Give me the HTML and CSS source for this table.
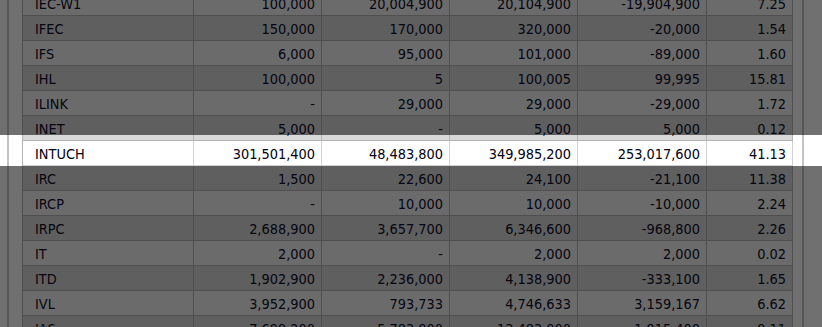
FILE: index.html
```html
<!DOCTYPE html>
<html>
<head>
<meta charset="utf-8">
<link rel="stylesheet" href="styles.css">
</head>
<body>
<div class="screen">
  <div class="rail"></div>
  <div class="sheet">
    <table class="grid">
      <colgroup>
        <col class="c-sym"><col class="c-num"><col class="c-num"><col class="c-num"><col class="c-num5"><col class="c-pct">
      </colgroup>
      <tbody>
        <tr class="light"><td>IEC-W1</td><td>100,000</td><td>20,004,900</td><td>20,104,900</td><td>-19,904,900</td><td>7.25</td></tr>
        <tr class="dark"><td>IFEC</td><td>150,000</td><td>170,000</td><td>320,000</td><td>-20,000</td><td>1.54</td></tr>
        <tr class="light"><td>IFS</td><td>6,000</td><td>95,000</td><td>101,000</td><td>-89,000</td><td>1.60</td></tr>
        <tr class="dark"><td>IHL</td><td>100,000</td><td>5</td><td>100,005</td><td>99,995</td><td>15.81</td></tr>
        <tr class="light"><td>ILINK</td><td>-</td><td>29,000</td><td>29,000</td><td>-29,000</td><td>1.72</td></tr>
        <tr class="dark"><td>INET</td><td>5,000</td><td>-</td><td>5,000</td><td>5,000</td><td>0.12</td></tr>
        <tr class="selected"><td>INTUCH</td><td>301,501,400</td><td>48,483,800</td><td>349,985,200</td><td>253,017,600</td><td>41.13</td></tr>
        <tr class="dark"><td>IRC</td><td>1,500</td><td>22,600</td><td>24,100</td><td>-21,100</td><td>11.38</td></tr>
        <tr class="light"><td>IRCP</td><td>-</td><td>10,000</td><td>10,000</td><td>-10,000</td><td>2.24</td></tr>
        <tr class="dark"><td>IRPC</td><td>2,688,900</td><td>3,657,700</td><td>6,346,600</td><td>-968,800</td><td>2.26</td></tr>
        <tr class="light"><td>IT</td><td>2,000</td><td>-</td><td>2,000</td><td>2,000</td><td>0.02</td></tr>
        <tr class="dark"><td>ITD</td><td>1,902,900</td><td>2,236,000</td><td>4,138,900</td><td>-333,100</td><td>1.65</td></tr>
        <tr class="light"><td>IVL</td><td>3,952,900</td><td>793,733</td><td>4,746,633</td><td>3,159,167</td><td>6.62</td></tr>
        <tr class="dark"><td>JAS</td><td>7,699,200</td><td>5,783,800</td><td>13,483,000</td><td>1,915,400</td><td>9.11</td></tr>
      </tbody>
    </table>
  </div>
  <div class="rail"></div>
</div>
<div class="dim dim-top"></div>
<div class="dim dim-bottom"></div>
</body>
</html>
```
FILE: styles.css
```css
html, body {
  margin: 0;
  padding: 0;
  background: #ffffff;
  overflow: hidden;
  height: 100%;
}

.screen {
  display: flex;
  align-items: stretch;
  height: 100%;
  padding-left: 7px;
}

.rail {
  width: 2px;
  flex: 0 0 2px;
  background: #c4c4c4;
}

.sheet {
  margin-left: 13px;
  margin-right: 9px;
}

.grid {
  border-collapse: separate;
  border-spacing: 0;
  table-layout: fixed;
  width: 771px;
  margin-top: -9px;
  border-left: 1px solid #b4b4b4;
  font-family: "DejaVu Sans Condensed", "DejaVu Sans", sans-serif;
  font-stretch: condensed;
  font-size: 14.4px;
  color: #0c0c28;
}

.c-sym { width: 171px; }
.c-num { width: 128px; }
.c-num5 { width: 129px; }
.c-pct { width: 86px; }

.grid td {
  height: 22px;
  line-height: 22px;
  padding: 2px 6px 0 0;
  border-right: 1px solid #b4b4b4;
  border-bottom: 1px solid #b4b4b4;
  text-align: right;
  white-space: nowrap;
  overflow: hidden;
}

.grid td:first-child {
  text-align: left;
  padding-left: 12px;
}

.light td { background: #f4f4f4; }
.dark td { background: #d8d8d8; }
.selected td {
  background: #ffffff;
  color: #000010;
  border-bottom-color: #d0d0d0;
  border-right-color: #d0d0d0;
}

.dim {
  position: fixed;
  left: 0;
  right: 0;
  background: rgba(0, 0, 0, 0.56);
}

.dim-top {
  top: 0;
  height: 135px;
}

.dim-bottom {
  top: 166px;
  bottom: 0;
}
```
